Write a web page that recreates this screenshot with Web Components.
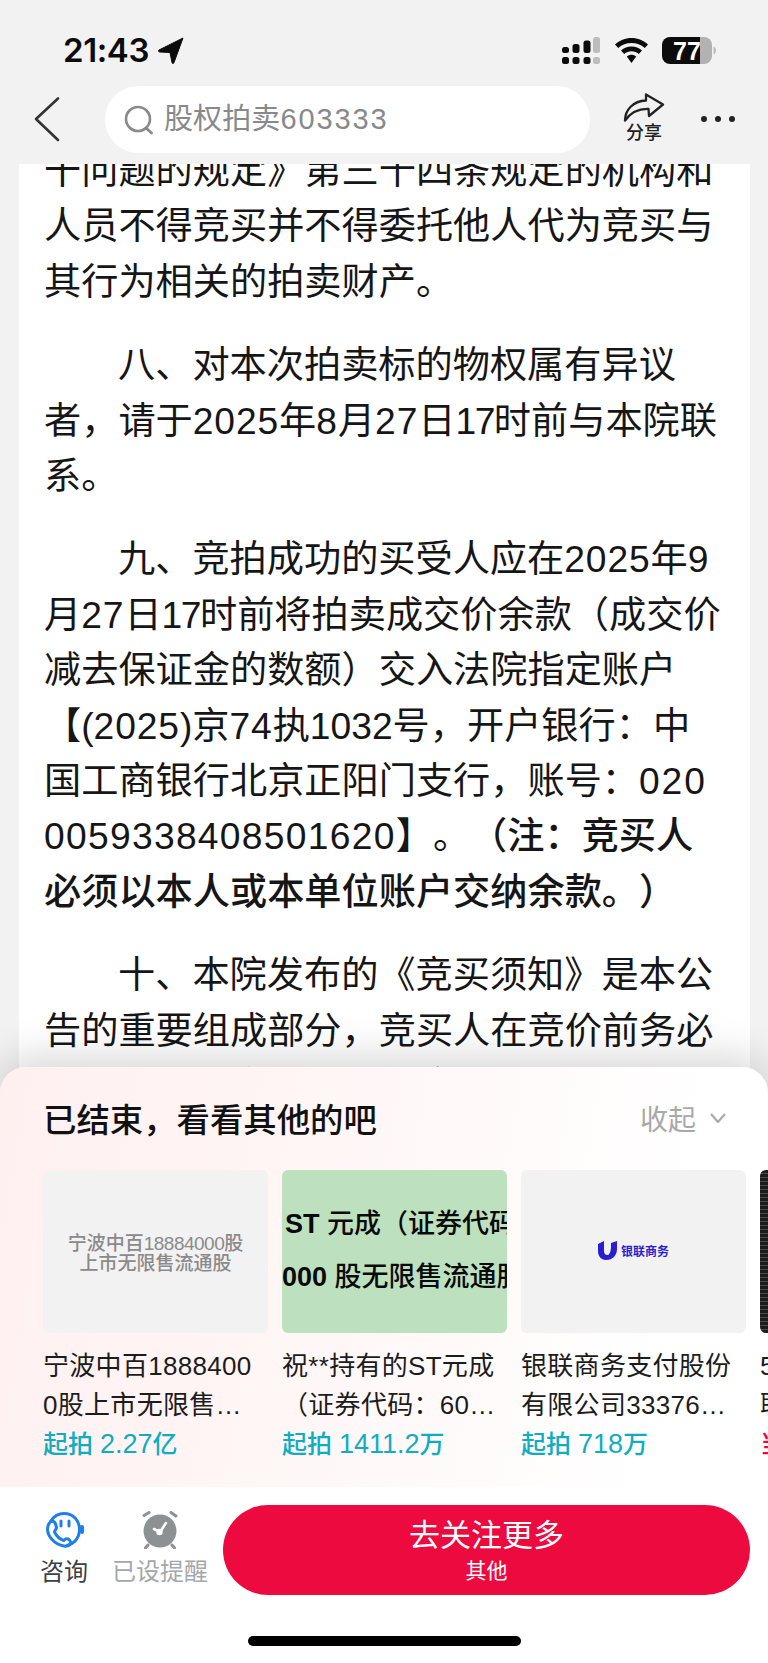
<!DOCTYPE html>
<html lang="zh-CN">
<head>
<meta charset="utf-8">
<title>拍卖公告</title>
<style>
	html, body { margin: 0; padding: 0; background: #f2f2f2; }
	body { font-family: "Liberation Sans", "Noto Sans CJK SC", sans-serif; text-spacing-trim: space-all; }
	.thumb-words { color: #8a8a8a; font-size: 19px; line-height: 20px; font-weight: 500; text-align: center; padding-top: 4px; }
	.thumb-words span { letter-spacing: -0.5px; }
	.thumb-st { color: #0a0a0a; font-size: 27px; font-weight: 500; line-height: 53px; white-space: nowrap; width: 225px; overflow: hidden; margin-top: -1px; }
	.thumb-st div:first-child { padding-left: 3px; }
</style>
</head>
<body>
<auction-page>
	<status-bar slot="status"></status-bar>
	<nav-bar slot="nav" keyword="股权拍卖603333"></nav-bar>
	<notice-article slot="article"></notice-article>
	<other-sheet slot="sheet" heading="已结束，看看其他的吧">
		<goods-card price="起拍 2.27亿" tone="#f2f2f2">
			<div slot="thumb" class="thumb-words">宁波中百<span>18884000</span>股<br>上市无限售流通股</div>
			宁波中百18884000股上市无限售…
		</goods-card>
		<goods-card price="起拍 1411.2万" tone="#bde0bf">
			<div slot="thumb" class="thumb-st"><div><b>ST</b> 元成（证券代码</div><div><b>000</b> 股无限售流通股</div></div>
			祝**持有的ST元成（证券代码：60…
		</goods-card>
		<goods-card price="起拍 718万" tone="#f2f2f2">
			<ums-logo slot="thumb"></ums-logo>
			银联商务支付股份有限公司33376…
		</goods-card>
		<goods-card price="当" price-color="#ee0a40" tone="repeating-linear-gradient(0deg, #1c1c1c 0 3px, #4a4a4a 3px 4px)">5<br>联</goods-card>
	</other-sheet>
	<action-bar slot="actions"></action-bar>
</auction-page>

<script>
class AuctionPage extends HTMLElement {
	connectedCallback() {
		this.attachShadow({ mode: 'open' });
		this.shadowRoot.innerHTML = `
		<style>
			:host { display: flex; flex-direction: column; width: 768px; height: 1663px; overflow: hidden; background: #f2f2f2; }
			.main { flex: 1; position: relative; overflow: hidden; min-height: 0; }
		</style>
		<slot name="status"></slot>
		<slot name="nav"></slot>
		<div class="main">
			<slot name="article"></slot>
			<slot name="sheet"></slot>
		</div>
		<slot name="actions"></slot>
		`;
	}
}

class StatusBar extends HTMLElement {
	connectedCallback() {
		this.attachShadow({ mode: 'open' });
		this.shadowRoot.innerHTML = `
		<style>
			:host { display: flex; align-items: flex-start; justify-content: space-between; height: 80px; padding: 37px 52px 0 63px; box-sizing: border-box; }
			.left { display: flex; align-items: center; gap: 9px; height: 27px; }
			.time { font: 600 33px/27px Inter, "Liberation Sans", sans-serif; color: #0c0c0c; letter-spacing: -0.4px; }
			.right { display: flex; align-items: flex-start; }
			svg { display: block; }
			.wifi { margin-left: 15px; margin-top: 1px; }
			.battery { margin-left: 14px; }
			.pct { font: 700 25px "Liberation Sans", sans-serif; }
		</style>
		<div class="left">
			<span class="time">21:43</span>
			<svg width="26" height="27" viewBox="0 0 26 27"><path d="M25 1 L1 13 C0 14 0.5 15 2 15 L12 15.5 L14 25.5 C14.3 27 15.5 27 16 25.5 Z" fill="#0c0c0c" stroke="#0c0c0c" stroke-linejoin="round"/></svg>
		</div>
		<div class="right">
			<svg width="38" height="27" viewBox="0 0 38 27">
				<rect x="0" y="10" width="7" height="6" rx="2.5" fill="#0c0c0c"/>
				<rect x="0" y="20" width="7" height="7" rx="2.5" fill="#0c0c0c"/>
				<rect x="10.5" y="7" width="7" height="9" rx="2.5" fill="#0c0c0c"/>
				<rect x="10.5" y="20" width="7" height="7" rx="2.5" fill="#0c0c0c"/>
				<rect x="21.5" y="3.5" width="7" height="12.5" rx="2.5" fill="#0c0c0c"/>
				<rect x="21.5" y="20" width="7" height="7" rx="2.5" fill="#0c0c0c"/>
				<rect x="31" y="0" width="7" height="16" rx="2.5" fill="#bdbdbd"/>
				<rect x="31" y="20" width="7" height="7" rx="2.5" fill="#bdbdbd"/>
			</svg>
			<svg class="wifi" width="33" height="25" viewBox="0 0 33 25">
				<path d="M16.5 0 C10 0 4.5 2.5 0 6.5 L3.2 10 C7 6.8 11.5 5 16.5 5 C21.5 5 26 6.8 29.8 10 L33 6.5 C28.5 2.5 23 0 16.5 0 Z" fill="#0c0c0c"/>
				<path d="M16.5 8.5 C12.5 8.5 9 10 6 12.5 L9.2 16 C11.3 14.3 13.8 13.3 16.5 13.3 C19.2 13.3 21.7 14.3 23.8 16 L27 12.5 C24 10 20.5 8.5 16.5 8.5 Z" fill="#0c0c0c"/>
				<path d="M16.5 16.8 C14.8 16.8 13.2 17.4 11.8 18.6 L16.5 25 L21.2 18.6 C19.8 17.4 18.2 16.8 16.5 16.8 Z" fill="#0c0c0c"/>
			</svg>
			<svg class="battery" width="54" height="27" viewBox="0 0 54 27">
				<path d="M8 0 H38 V27 H8 A8 8 0 0 1 0 19 V8 A8 8 0 0 1 8 0 Z" fill="#0c0c0c"/>
				<path d="M38 0 H42 A8 8 0 0 1 50 8 V19 A8 8 0 0 1 42 27 H38 Z" fill="#b2b2b2"/>
				<path d="M51.5 9.5 C53 10 54 11.5 54 13.5 C54 15.5 53 17 51.5 17.5 Z" fill="#bdbdbd"/>
				<text class="pct" x="25" y="22.5" text-anchor="middle" fill="#fff">77</text>
			</svg>
		</div>
		`;
	}
}

class NavBar extends HTMLElement {
	connectedCallback() {
		const keyword = this.getAttribute('keyword') || '';
		this.attachShadow({ mode: 'open' });
		this.shadowRoot.innerHTML = `
		<style>
			:host { display: flex; align-items: flex-start; height: 84px; box-sizing: border-box; padding: 6px 0 0 33px; font-family: "Liberation Sans", "Noto Sans CJK SC", sans-serif; }
			svg { display: block; }
			.back { margin: 10px 44px 0 0; }
			.pill { display: flex; align-items: center; gap: 10px; width: 485px; height: 67px; border-radius: 34px; background: #fff; box-sizing: border-box; padding: 0 0 0 19px; }
			.word { font-size: 29px; color: #87898b; line-height: 67px; letter-spacing: 0.1px; }
			.word span { letter-spacing: 1.9px; }
			.share { display: flex; flex-direction: column; align-items: center; width: 42px; margin: 7px 0 0 33px; }
			.share span { font-size: 18px; line-height: 18px; color: #222; margin-top: 2px; font-weight: 500; }
			.more { margin: 29px 0 0 35px; }
		</style>
		<svg class="back" width="28" height="46" viewBox="0 0 28 46"><path d="M25 2.5 L3 23 L25 44" fill="none" stroke="#333" stroke-width="2.6" stroke-linecap="round" stroke-linejoin="round"/></svg>
		<div class="pill">
			<svg width="30" height="30" viewBox="0 0 30 30"><circle cx="14" cy="14" r="12" fill="none" stroke="#87898b" stroke-width="2.6"/><path d="M22 23 L27.5 28" stroke="#87898b" stroke-width="2.8" stroke-linecap="round"/></svg>
			<div class="word">${keyword.replace(/\d+/, '<span>$&</span>')}</div>
		</div>
		<div class="share">
			<svg width="42" height="29" viewBox="0 0 42 29"><path d="M2 27.5 C2 17 10 8 23 7.5 L23 1.5 L40 11.5 L26 23 L25.5 15.8 C16 15.5 7.5 19.5 2 27.5 Z" fill="none" stroke="#222" stroke-width="2.3" stroke-linejoin="round"/></svg>
			<span>分享</span>
		</div>
		<svg class="more" width="36" height="8" viewBox="0 0 36 8"><circle cx="4" cy="4" r="3" fill="#222"/><circle cx="18" cy="4" r="3" fill="#222"/><circle cx="32" cy="4" r="3" fill="#222"/></svg>
		`;
	}
}

class NoticeArticle extends HTMLElement {
	connectedCallback() {
		this.attachShadow({ mode: 'open' });
		this.shadowRoot.innerHTML = `
		<style>
			:host { display: block; margin: 0 18px 0 19px; height: 100%; background: #fff; overflow: hidden; padding: 0 25px; box-sizing: border-box; font-family: "Liberation Sans", "Noto Sans CJK SC", sans-serif; color: #161616; text-spacing-trim: space-all; }
			.body { margin-top: -20px; }
			p { margin: 0 0 28px; font-size: 37.2px; line-height: 55.4px; white-space: nowrap; }
			.in { margin-left: 74px; }
			i { font-style: normal; letter-spacing: 0.9px; }
			i.one { letter-spacing: -1.5px; }
			i.tight { letter-spacing: 0; }
			i.wide { letter-spacing: 1.9px; }
			i.acct { letter-spacing: 1.3px; }
			strong { font-weight: 500; }
		</style>
		<div class="body">
			<p>干问题的规定》第三十四条规定的机构和<br>人员不得竞买并不得委托他人代为竞买与<br>其行为相关的拍卖财产。</p>
			<p><span class="in">八、对本次拍卖标的物权属有异议</span><br>者，请于<i>2025</i>年<i>8</i>月<i>27</i>日<i class="one">17</i>时前与本院联<br>系。</p>
			<p><span class="in">九、竞拍成功的买受人应在<i>2025</i>年<i>9</i></span><br>月<i>27</i>日<i class="one">17</i>时前将拍卖成交价余款（成交价<br>减去保证金的数额）交入法院指定账户<br>【(<i>2025</i>)京<i>74</i>执<i class="tight">1032</i>号，开户银行：中<br>国工商银行北京正阳门支行，账号：<i class="wide">020</i><br><i class="acct">0059338408501620</i>】。<strong>（注：竞买人</strong><br><strong>必须以本人或本单位账户交纳余款。）</strong></p>
			<p><span class="in">十、本院发布的《竞买须知》是本公</span><br>告的重要组成部分，竞买人在竞价前务必<br>认真阅读。竞买人在网络司法拍卖平台报</p>
		</div>
		`;
	}
}

class OtherSheet extends HTMLElement {
	connectedCallback() {
		const heading = this.getAttribute('heading') || '';
		this.attachShadow({ mode: 'open' });
		this.shadowRoot.innerHTML = `
		<style>
			:host { display: block; position: absolute; left: 0; right: 0; bottom: 0; height: 420px; border-radius: 26px 26px 0 0; background: linear-gradient(100deg, #fff0f0 0%, #fff6f6 40%, #ffffff 85%); box-shadow: 0 -10px 40px rgba(0,0,0,.16); font-family: "Liberation Sans", "Noto Sans CJK SC", sans-serif; }
			.head { display: flex; justify-content: space-between; align-items: center; height: 103px; box-sizing: border-box; padding: 0 42px 2px 43px; }
			h2 { margin: 0; font-size: 33.4px; font-weight: 500; color: #111; }
			.fold { display: flex; align-items: center; gap: 14px; font-size: 28px; color: #a9a9a9; }
			.list { display: flex; gap: 14px; padding-left: 43px; width: 1000px; }
			svg { display: block; }
		</style>
		<div class="head">
			<h2>${heading}</h2>
			<div class="fold">收起<svg width="16" height="10" viewBox="0 0 16 10"><path d="M1 1 L8 9 L15 1" fill="none" stroke="#a9a9a9" stroke-width="2.2"/></svg></div>
		</div>
		<div class="list"><slot></slot></div>
		`;
	}
}

class GoodsCard extends HTMLElement {
	connectedCallback() {
		const price = this.getAttribute('price') || '';
		const tone = this.getAttribute('tone') || '#f2f2f2';
		const priceColor = this.getAttribute('price-color') || '#10adc0';
		this.attachShadow({ mode: 'open' });
		this.shadowRoot.innerHTML = `
		<style>
			:host { display: block; width: 225px; flex: none; }
			.thumb { height: 163px; border-radius: 6px; overflow: hidden; background: ${tone}; display: flex; flex-direction: column; align-items: stretch; justify-content: center; }
			.title { margin-top: 14px; width: 218px; height: 78px; font-size: 26px; line-height: 39px; letter-spacing: 0.3px; color: #1c1c1c; word-break: break-all; overflow: hidden; }
			.price { font-size: 25px; line-height: 39px; color: ${priceColor}; font-weight: 500; }
			.price span { font-size: 27px; font-weight: 400; }
		</style>
		<div class="thumb"><slot name="thumb"></slot></div>
		<div class="title"><slot></slot></div>
		<div class="price">${price.replace(/[\d.]+/, '<span>$&</span>')}</div>
		`;
	}
}

class UmsLogo extends HTMLElement {
	connectedCallback() {
		this.attachShadow({ mode: 'open' });
		this.shadowRoot.innerHTML = `
		<style>
			:host { display: flex; justify-content: center; align-items: center; gap: 4px; color: #2a1fd0; font-family: "Noto Sans CJK SC", sans-serif; padding-bottom: 2px; }
			span { font-size: 12px; font-weight: 700; line-height: 20px; }
			svg { display: block; }
		</style>
		<svg width="19" height="20" viewBox="0 0 19 20">
			<path d="M0 3 L6 0 L6 10 C6 13 8 14.5 10 14 C12 13 13 9 13 5 L13 2 L19 0 L19 8 C19 14 15 19 8 19 C3 19 0 15 0 10 Z" fill="#2a1fd0"/>
		</svg>
		<span>银联商务</span>
		`;
	}
}

class ActionBar extends HTMLElement {
	connectedCallback() {
		this.attachShadow({ mode: 'open' });
		this.shadowRoot.innerHTML = `
		<style>
			:host { display: flex; flex-direction: column; height: 176px; background: #fff; box-sizing: border-box; padding: 18px 18px 0 0; font-family: "Liberation Sans", "Noto Sans CJK SC", sans-serif; }
			.row { display: flex; align-items: flex-start; height: 90px; }
			.tool { display: flex; flex-direction: column; align-items: center; font-size: 24px; line-height: 30px; margin-top: 6px; }
			.tool svg { display: block; height: 38px; }
			.tool span { margin-top: 8px; white-space: nowrap; }
			.ask { width: 48px; margin-left: 40px; color: #3d3f44; }
			.remind { width: 96px; margin-left: 24px; color: #a5a7aa; }
			.go { flex: 1; height: 90px; margin-left: 15px; border-radius: 45px; background: #ec0a3f; color: #fff; display: flex; flex-direction: column; align-items: center; padding-top: 12px; box-sizing: border-box; }
			.go b { font-size: 31px; font-weight: 400; line-height: 38px; }
			.go span { font-size: 21px; line-height: 30px; margin-top: 1px; }
			.home { align-self: center; width: 273px; height: 10px; border-radius: 5px; background: #000; margin: 41px 0 0 18px; }
		</style>
		<div class="row">
			<div class="tool ask">
				<svg width="40" height="38" viewBox="0 0 40 38">
					<g fill="none" stroke="#1f7fe8" stroke-width="3" stroke-linecap="round" stroke-linejoin="round">
						<path d="M7 10 C10 5 14 2.5 20 2.5 C29 2.5 35.5 9.5 35.5 18 C35.5 27 30 33 23 34.5"/>
						<path d="M7 10 C9.5 10 11 11 11.5 13 L12.5 16.5 C12.5 18.5 10.5 19 10.5 21 C12.5 25 16 28.5 20 29.5 C21 28 23 27 25 28.5 L27 31.5 C26.5 34.5 23 35.5 20 35 C10 33.5 3.5 25 3.5 18 C3.5 15 5 12 7 10 Z"/>
						<path d="M17 10 V15"/>
						<path d="M25 10 V15"/>
					</g>
					<rect x="36" y="14" width="4" height="9" rx="2" fill="#1f7fe8"/>
				</svg>
				<span>咨询</span>
			</div>
			<div class="tool remind">
				<svg width="38" height="38" viewBox="0 0 38 38">
					<circle cx="19" cy="20" r="16.5" fill="#8d9191"/>
					<path d="M3 4.5 L8 1.5 M30 1.5 L35 5 M7 34 L4.5 37 M31 34 L33.5 37" stroke="#8d9191" stroke-width="3" stroke-linecap="round"/>
					<path d="M19 21 L25 12 M19 21 L13 18" stroke="#fff" stroke-width="2.6" stroke-linecap="round"/>
					<circle cx="18.5" cy="21" r="3.2" fill="#fff"/>
				</svg>
				<span>已设提醒</span>
			</div>
			<div class="go"><b>去关注更多</b><span>其他</span></div>
		</div>
		<div class="home"></div>
		`;
	}
}

customElements.define('auction-page', AuctionPage);
customElements.define('status-bar', StatusBar);
customElements.define('nav-bar', NavBar);
customElements.define('notice-article', NoticeArticle);
customElements.define('other-sheet', OtherSheet);
customElements.define('goods-card', GoodsCard);
customElements.define('ums-logo', UmsLogo);
customElements.define('action-bar', ActionBar);
</script>
</body>
</html>
